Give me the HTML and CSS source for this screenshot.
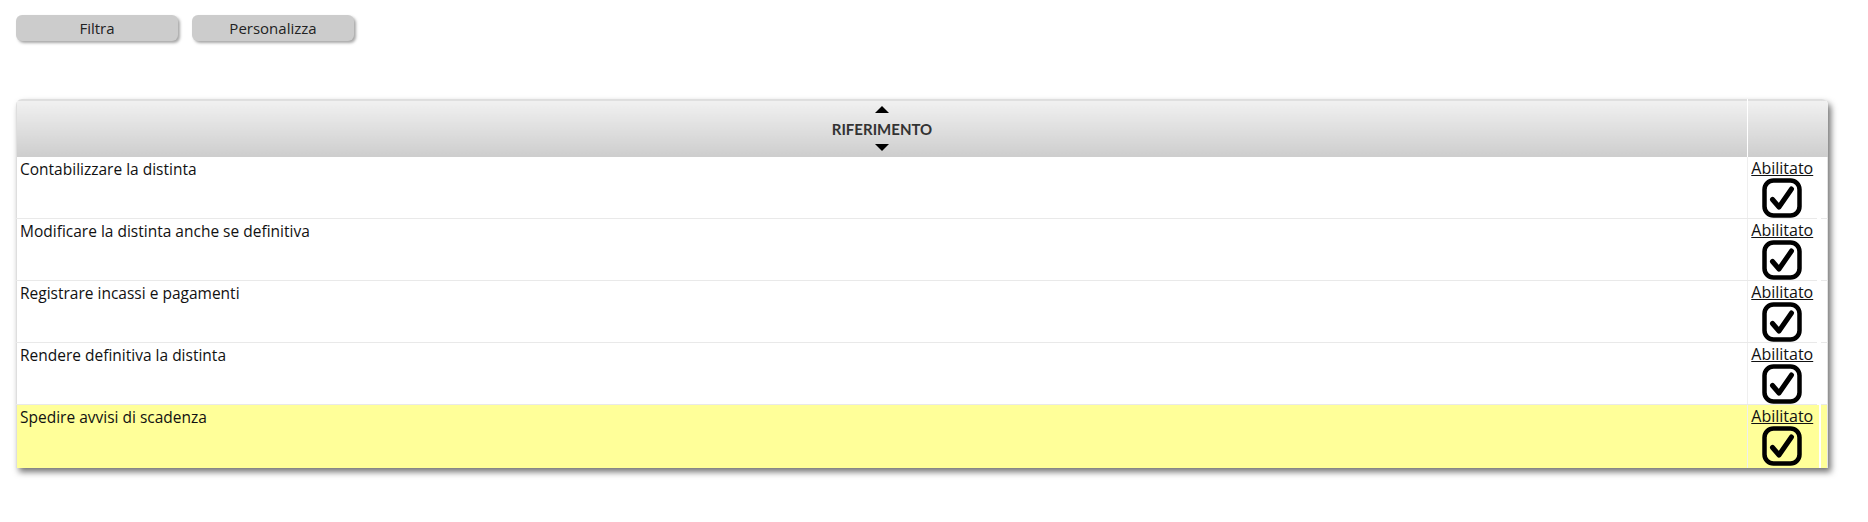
FILE: index.html
```html
<!DOCTYPE html>
<html lang="it">
<head>
    <meta charset="UTF-8">
    <title>Permessi distinta</title>
    <link rel="stylesheet" href="styles.css">
</head>
<body>
    <div class="toolbar">
        <button class="btn">Filtra</button>
        <button class="btn">Personalizza</button>
    </div>

    <div class="grid-wrap">
        <table class="grid">
            <thead>
                <tr>
                    <th class="col-ref">
                        <span class="sort-up"></span>
                        <span class="th-label">RIFERIMENTO</span>
                        <span class="sort-down"></span>
                    </th>
                    <th class="col-state"></th>
                    <th class="col-gutter"></th>
                </tr>
            </thead>
            <tbody>
                <tr>
                    <td class="col-ref">Contabilizzare la distinta</td>
                    <td class="col-state"><a href="#">Abilitato</a><span class="check"></span></td>
                    <td class="col-gutter"></td>
                </tr>
                <tr>
                    <td class="col-ref">Modificare la distinta anche se definitiva</td>
                    <td class="col-state"><a href="#">Abilitato</a><span class="check"></span></td>
                    <td class="col-gutter"></td>
                </tr>
                <tr>
                    <td class="col-ref">Registrare incassi e pagamenti</td>
                    <td class="col-state"><a href="#">Abilitato</a><span class="check"></span></td>
                    <td class="col-gutter"></td>
                </tr>
                <tr>
                    <td class="col-ref">Rendere definitiva la distinta</td>
                    <td class="col-state"><a href="#">Abilitato</a><span class="check"></span></td>
                    <td class="col-gutter"></td>
                </tr>
                <tr class="selected">
                    <td class="col-ref">Spedire avvisi di scadenza</td>
                    <td class="col-state"><a href="#">Abilitato</a><span class="check"></span></td>
                    <td class="col-gutter"></td>
                </tr>
            </tbody>
        </table>
    </div>

    <script>
        // icona spunta, uguale per ogni riga
        var svg = '<svg width="40" height="40" viewBox="0 0 40 40">' +
            '<rect x="2.5" y="2.5" width="35" height="35" rx="9" fill="none" stroke="#000" stroke-width="4.5"/>' +
            '<path d="M10.5 21.5 L17 29 L29.5 11" fill="none" stroke="#000" stroke-width="5" stroke-linecap="round" stroke-linejoin="round"/>' +
            '</svg>';
        document.querySelectorAll('.check').forEach(function (el) {
            el.innerHTML = svg;
        });
    </script>
</body>
</html>
```

FILE: styles.css
```css
* {
    margin: 0;
    padding: 0;
    box-sizing: border-box;
}

body {
    font-family: "Open Sans", "DejaVu Sans", sans-serif;
    font-size: 15.5px;
    color: #111;
    background: #fff;
    padding: 15px 40px 40px 16px;
}

.toolbar {
    display: flex;
    gap: 14px;
    height: 26px;
}

.btn {
    width: 162px;
    height: 26px;
    background: #cccccc;
    border: none;
    border-radius: 6px;
    box-shadow: 2px 2px 3px rgba(0,0,0,0.35);
    font-family: inherit;
    font-size: 15px;
    color: #222;
    cursor: pointer;
}

.grid-wrap {
    margin-top: 58px;
    border-radius: 6px 6px 0 0;
    box-shadow: 3px 4px 6px rgba(0,0,0,0.55);
    overflow: hidden;
    background: #fff;
}

.grid {
    width: 100%;
    border-collapse: collapse;
    table-layout: fixed;
}

.grid th {
    height: 57px;
    background: linear-gradient(#f1f1f1, #cdcdcd);
    border-top: 1px solid #dedede;
    font-family: Lato, "Open Sans", sans-serif;
    font-weight: bold;
    font-size: 15px;
    color: #333;
    vertical-align: middle;
}

.grid th.col-ref {
    border-left: 1px solid #dedede;
    border-right: 1px solid #fff;
    text-align: center;
    position: relative;
}

.th-label {
    display: block;
    line-height: 18px;
    padding-top: 2px;
}

.sort-up,
.sort-down {
    position: absolute;
    left: 50%;
    margin-left: -7px;
    width: 0;
    height: 0;
    border-left: 7px solid transparent;
    border-right: 7px solid transparent;
}

.sort-up {
    top: 6px;
    border-bottom: 7px solid #000;
}

.sort-down {
    bottom: 6px;
    border-top: 7px solid #000;
}

.col-state {
    width: 71px;
}

.col-gutter {
    width: 9px;
}

.grid td {
    height: 62px;
    vertical-align: top;
    border-bottom: 1px solid #e9e9e9;
}

.grid tbody tr:last-child td {
    border-bottom: none;
    height: 63px;
}

.grid td.col-ref {
    border-left: 1px solid #dedede;
    border-right: 1px solid #efefef;
    padding: 2px 3px;
    line-height: 20px;
}

.grid td.col-state {
    border-right: 1px solid #e4e4e4;
    text-align: center;
    padding-top: 2px;
    line-height: 19px;
}

.grid td.col-gutter {
    border-left: 4px solid transparent;
    border-right: 1px solid #e4e4e4;
    background-clip: padding-box;
}

.grid td.col-state a {
    color: #111;
    font-size: 16px;
    text-decoration: underline;
}

.check {
    display: block;
    width: 40px;
    height: 40px;
    margin: 0 auto;
}

.check svg {
    display: block;
}

.selected td {
    background: #ffff99;
}
```
